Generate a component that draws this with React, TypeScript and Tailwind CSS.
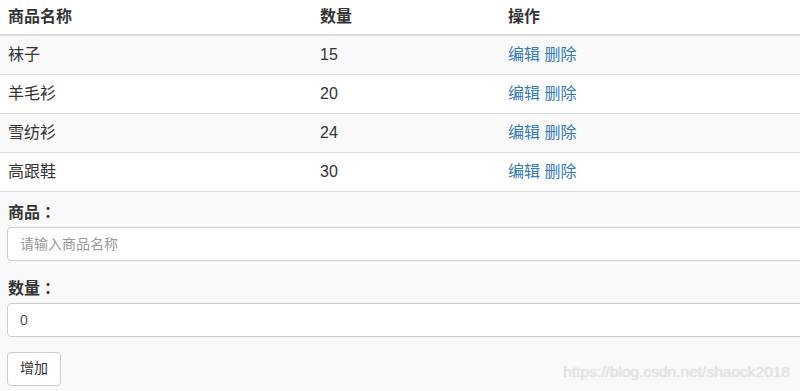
const goods = [
  { name: '袜子', count: 15 },
  { name: '羊毛衫', count: 20 },
  { name: '雪纺衫', count: 24 },
  { name: '高跟鞋', count: 30 },
];

const font = { fontFamily: '"Liberation Sans", "Noto Sans CJK SC", sans-serif' };
const colon = { fontFamily: '"Noto Sans CJK TC", sans-serif' };

export default function App() {
  return (
    <div className="relative w-[800px] h-[391px] overflow-hidden bg-[#f9f9f9] text-[16px] text-[#333]" style={font}>
      <table className="w-[820px] border-collapse">
        <thead>
          <tr className="bg-white h-[35px] border-b-2 border-[#ddd]">
            <th className="w-[312px] px-2 text-left font-bold">商品名称</th>
            <th className="w-[188px] px-2 text-left font-bold">数量</th>
            <th className="px-2 text-left font-bold">操作</th>
          </tr>
        </thead>
        <tbody>
          {goods.map((g, i) => (
            <tr
              key={g.name}
              className={`h-[39px] border-b border-[#ddd] ${i % 2 === 0 ? 'bg-[#f9f9f9]' : 'bg-white'}`}
            >
              <td className="px-2">{g.name}</td>
              <td className="px-2">{g.count}</td>
              <td className="px-2 text-[#337ab7]">
                <a className="cursor-pointer">编辑</a> <a className="cursor-pointer">删除</a>
              </td>
            </tr>
          ))}
        </tbody>
      </table>
      <form className="pl-[7px] pt-[8px]">
        <div className="mb-[15px]">
          <label className="block h-[22px] pl-px mb-[5px] font-bold leading-[22px]">
            商品<span style={colon}>：</span>
          </label>
          <input
            className="w-[820px] h-[34px] px-3 text-[14px] rounded border border-[#ccc] bg-white outline-none placeholder:text-[#999] text-[#555]"
            placeholder="请输入商品名称"
            style={font}
          />
        </div>
        <div className="mb-[15px]">
          <label className="block h-[22px] pl-px mb-[5px] font-bold leading-[22px]">
            数量<span style={colon}>：</span>
          </label>
          <input
            className="w-[820px] h-[34px] px-3 text-[14px] rounded border border-[#ccc] bg-white outline-none text-[#555]"
            defaultValue="0"
            style={font}
          />
        </div>
        <button
          type="button"
          className="h-[34px] w-[54px] text-[14px] rounded border border-[#ccc] bg-white text-[#333]"
        >
          增加
        </button>
      </form>
      <div
        className="absolute right-[10px] bottom-[8px] text-[15.5px] text-[#e6e6e6]"
        style={{ textShadow: '0 0 1px #cfcfcf' }}
      >
        https://blog.csdn.net/shaock2018
      </div>
    </div>
  );
}
